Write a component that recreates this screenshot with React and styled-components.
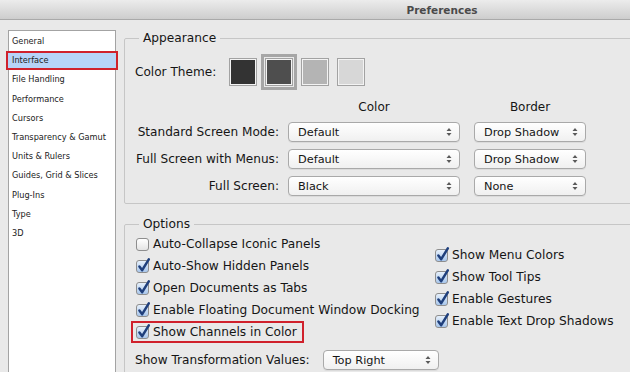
import * as React from 'react';
import styled, { createGlobalStyle } from 'styled-components';

const FONT = `"DejaVu Sans", "Liberation Sans", sans-serif`;
const TEXT = '#151515';
const GROUP_BORDER = '#c6c6c6';

const GlobalStyle = createGlobalStyle`
	html, body {
		margin: 0;
		padding: 0;
		overflow: hidden;
		background: #e9e9e9;
	}
	body {
		font-family: ${FONT};
		color: ${TEXT};
	}
`;

/* the real window is wider than the shot: its right part is clipped */
const Window = styled.div`
	width: 630px;
	height: 372px;
	overflow: hidden;
	background: #e9e9e9;
`;

const TitleBar = styled.div`
	height: 19px;
	border-bottom: 1px solid #a9a9a9;
	background: linear-gradient(#ececec, #cdcdcd);
	display: flex;
	align-items: center;
	justify-content: center;
	padding-left: 254px;
	font-size: 10.5px;
	font-weight: bold;
	color: #4a4a4a;
`;

const Body = styled.div`
	display: flex;
	padding: 10px 0 0 8px;
`;

const Sidebar = styled.ul`
	list-style: none;
	margin: 0;
	padding: 1px 0 0;
	width: 106px;
	height: 340px;
	background: #fff;
	border: 1px solid #a3a3a3;
	flex-shrink: 0;
`;

const SideItem = styled.li`
	height: 19.2px;
	line-height: 19.2px;
	font-size: 8.2px;
	padding-left: 3px;
	color: #222;
	white-space: nowrap;
	${p => p.$active && `
		margin: 0 -3px;
		padding-left: 6px;
		background: #b7d4f8;
		box-shadow: inset 0 0 0 2px #d0212c;
	`}
`;

const Content = styled.div`
	flex: 1;
	min-width: 0;
	margin-left: 8px;
	margin-right: -12px;
	display: flex;
	flex-direction: column;
	gap: 12px;
`;

const Group = styled.fieldset`
	margin: 0;
	padding: 0 10px ${p => p.$bottom || 0}px;
	border: 1px solid ${GROUP_BORDER};
	border-radius: 2px;
	min-width: 0;
`;

const Legend = styled.legend`
	margin-left: 4px;
	padding: 0 4px;
	font-size: 12.2px;
	line-height: 16px;
`;

const ThemeRow = styled.div`
	display: flex;
	align-items: center;
	margin-top: 12px;
	height: 28px;
`;

const Label = styled.span`
	font-size: 12.1px;
	white-space: nowrap;
`;

const Swatches = styled.div`
	display: flex;
	gap: 8px;
	margin-left: 13px;
`;

const Swatch = styled.div`
	width: 26px;
	height: 26px;
	border: 1px solid #a2a2a2;
	box-shadow: inset 0 0 0 1px #f3f3f3;
	background: ${p => p.$color};
	${p => p.$selected && `
		outline: 3px solid #a6a6a6;
		outline-offset: 1px;
	`}
`;

const ModeGrid = styled.div`
	display: grid;
	grid-template-columns: 144px 172px 117px;
	column-gap: 9px;
	row-gap: 7px;
	margin-top: 13px;
	align-items: center;
	& > :nth-child(3n) {
		margin-left: 5px;
	}
`;

const ColumnHead = styled.div`
	text-align: center;
	font-size: 12px;
	line-height: 16px;
`;

const RowLabel = styled.div`
	text-align: right;
	font-size: 12.1px;
	white-space: nowrap;
`;

const SelectBox = styled.div`
	box-sizing: border-box;
	height: 20px;
	width: ${p => (p.$width ? `${p.$width}px` : 'auto')};
	border: 1px solid #a9a9a9;
	border-radius: 4px;
	background: linear-gradient(#ffffff, #f0f0f0);
	box-shadow: 0 1px 0 rgba(0, 0, 0, 0.06);
	display: flex;
	align-items: center;
	justify-content: space-between;
	padding: 0 7px 0 9px;
	font-size: 11.3px;
	white-space: nowrap;
`;

const OptionsArea = styled.div`
	display: flex;
	margin: 1px 0 0 1px;
`;

const OptionColumn = styled.div`
	display: flex;
	flex-direction: column;
	flex-shrink: 0;
	width: ${p => p.$width}px;
	margin-top: ${p => p.$top || 0}px;
`;

const CheckRow = styled.div`
	display: flex;
	height: 22px;
	align-items: center;
`;

const CheckItem = styled.div`
	display: inline-flex;
	align-items: center;
	gap: 4px;
	height: 22px;
	font-size: 12.2px;
	white-space: nowrap;
	${p => p.$marked && `
		margin-left: -5px;
		padding: 0 7px 0 5px;
		box-shadow: inset 0 0 0 2px #d0212c;
	`}
`;

const Box = styled.span`
	position: relative;
	box-sizing: border-box;
	width: 13px;
	height: 13px;
	border: 1px solid #8e8e8e;
	border-radius: 3px;
	flex-shrink: 0;
	background: ${p => (p.$on
		? 'linear-gradient(#e6f0fb, #a9c7ec)'
		: 'linear-gradient(#ffffff, #e4e4e4)')};
	& svg {
		position: absolute;
		left: 0;
		top: -3px;
		overflow: visible;
	}
`;

const TransformRow = styled.div`
	display: flex;
	align-items: center;
	gap: 13px;
	margin-top: 7px;
	height: 20px;
`;

const Arrows = () => (
	<svg width="6" height="10" viewBox="0 0 6 10">
		<path d="M3 1 L5.5 4 L0.5 4 Z M3 9 L5.5 6 L0.5 6 Z" fill="#5a5a5a" />
	</svg>
);

const Select = ({ value, width }) => (
	<SelectBox $width={width}>
		<span>{value}</span>
		<Arrows />
	</SelectBox>
);

const Check = ({ on, label, marked }) => (
	<CheckRow>
		<CheckItem $marked={marked}>
			<Box $on={on}>
				{on && (
					<svg width="13" height="15" viewBox="0 0 13 15">
						<path
							d="M2.4 8.6 L5.2 12.2 L11.8 1.4"
							fill="none"
							stroke="#1f3f7c"
							strokeWidth="2.5"
							strokeLinecap="round"
							strokeLinejoin="round"
						/>
					</svg>
				)}
			</Box>
			<span>{label}</span>
		</CheckItem>
	</CheckRow>
);

const SECTIONS = [
	'General',
	'Interface',
	'File Handling',
	'Performance',
	'Cursors',
	'Transparency & Gamut',
	'Units & Rulers',
	'Guides, Grid & Slices',
	'Plug-Ins',
	'Type',
	'3D',
];

const THEMES = ['#333333', '#4e4e4e', '#b4b4b4', '#d7d7d7'];

const MODES = [
	{ label: 'Standard Screen Mode:', color: 'Default', border: 'Drop Shadow' },
	{ label: 'Full Screen with Menus:', color: 'Default', border: 'Drop Shadow' },
	{ label: 'Full Screen:', color: 'Black', border: 'None' },
];

const LEFT_OPTIONS = [
	{ label: 'Auto-Collapse Iconic Panels', on: false },
	{ label: 'Auto-Show Hidden Panels', on: true },
	{ label: 'Open Documents as Tabs', on: true },
	{ label: 'Enable Floating Document Window Docking', on: true },
	{ label: 'Show Channels in Color', on: true, marked: true },
];

const RIGHT_OPTIONS = [
	'Show Menu Colors',
	'Show Tool Tips',
	'Enable Gestures',
	'Enable Text Drop Shadows',
];

export default function App() {
	return (
		<Window>
			<GlobalStyle />
			<TitleBar>Preferences</TitleBar>
			<Body>
				<Sidebar>
					{SECTIONS.map(name => (
						<SideItem key={name} $active={name === 'Interface'}>{name}</SideItem>
					))}
				</Sidebar>
				<Content>
					<Group $bottom={7}>
						<Legend>Appearance</Legend>
						<ThemeRow>
							<Label>Color Theme:</Label>
							<Swatches>
								{THEMES.map((c, i) => (
									<Swatch key={c} $color={c} $selected={i === 1} />
								))}
							</Swatches>
						</ThemeRow>
						<ModeGrid>
							<div />
							<ColumnHead>Color</ColumnHead>
							<ColumnHead>Border</ColumnHead>
							{MODES.map(m => (
								<React.Fragment key={m.label}>
									<RowLabel>{m.label}</RowLabel>
									<Select value={m.color} />
									<Select value={m.border} />
								</React.Fragment>
							))}
						</ModeGrid>
					</Group>
					<Group $bottom={4}>
						<Legend>Options</Legend>
						<OptionsArea>
							<OptionColumn $width={299}>
								{LEFT_OPTIONS.map(o => (
									<Check key={o.label} on={o.on} label={o.label} marked={o.marked} />
								))}
							</OptionColumn>
							<OptionColumn $width={200} $top={11}>
								{RIGHT_OPTIONS.map(l => (
									<Check key={l} on label={l} />
								))}
							</OptionColumn>
						</OptionsArea>
						<TransformRow>
							<Label>Show Transformation Values:</Label>
							<Select value="Top Right" width={116} />
						</TransformRow>
					</Group>
				</Content>
			</Body>
		</Window>
	);
}
